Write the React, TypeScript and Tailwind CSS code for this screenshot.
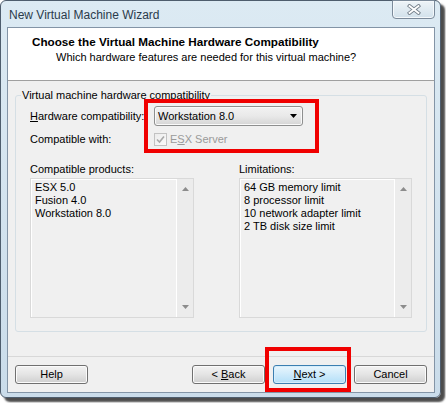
import React from "react";

const ScrollArrow = ({ down }: { down?: boolean }) => (
  <svg width="7" height="4" viewBox="0 0 7 4" className="block">
    {down ? (
      <polygon points="0,0 7,0 3.5,4" fill="#8c8c8c" />
    ) : (
      <polygon points="0,4 7,4 3.5,0" fill="#8c8c8c" />
    )}
  </svg>
);

const ListBox = ({ items, className }: { items: string[]; className: string }) => (
  <div
    className={`flex h-[140px] border border-[#d9d9d9] bg-[#f0f0f0] shadow-[inset_1px_1px_0_#ffffff] ${className}`}
  >
    <div className="flex-1 pl-[4px] pt-[2px] leading-[13px]">
      {items.map((item) => (
        <div key={item}>{item}</div>
      ))}
    </div>
    <div className="flex w-[17px] flex-col items-center justify-between border-l border-[#ffffff] bg-[#ececec] pt-[8px] pb-[8px]">
      <ScrollArrow />
      <ScrollArrow down />
    </div>
  </div>
);

const WizardButton = ({
  children,
  primary,
}: {
  children: React.ReactNode;
  primary?: boolean;
}) => (
  <button
    className={`h-[19px] w-[73px] rounded-[3px] border leading-[15px] text-black ${
      primary
        ? "border-[#3c7fb1] bg-gradient-to-b from-[#eaf6fd] to-[#b3dff8] shadow-[inset_0_0_0_1px_#d6eefc]"
        : "border-[#707070] bg-gradient-to-b from-[#f3f3f3] via-[#e4e4e4] to-[#cfcfcf] shadow-[inset_0_0_0_1px_#fbfbfb]"
    }`}
  >
    {children}
  </button>
);

export default function App() {
  return (
    <div className="relative h-[403px] w-[446px] bg-white font-['Liberation_Sans',Arial,sans-serif] text-[11px] text-black">
      {/* window frame */}
      <div className="flex h-[398px] w-[441px] flex-col rounded-[6px] border border-[#4e5d6d] bg-gradient-to-b from-[#dceaf3] to-[#cadcea] pl-[6px] pr-[5px] pb-[4px] shadow-[4px_4px_2px_rgba(0,0,0,0.7)]">
        <div className="flex h-[26px] items-start justify-between">
          <div className="pt-[6px] pl-[2px] text-[12px] leading-[16px] text-[#2b3b4b]">
            New Virtual Machine Wizard
          </div>
          <div className="-mt-[1px] flex h-[19px] w-[43px] items-center justify-center rounded-b-[4px] border border-[#7b8a9a] bg-gradient-to-b from-[#eef4f8] to-[#d2e1eb] shadow-[inset_0_0_0_1px_#f4f8fb]">
            <svg width="14" height="11" viewBox="0 0 14 11">
              <path
                d="M2.5 2 L11.5 9 M11.5 2 L2.5 9"
                stroke="#76818c"
                strokeWidth="3.6"
                strokeLinecap="square"
              />
              <path
                d="M2.5 2 L11.5 9 M11.5 2 L2.5 9"
                stroke="#ffffff"
                strokeWidth="1.8"
                strokeLinecap="square"
              />
            </svg>
          </div>
        </div>

        {/* client area */}
        <div className="flex flex-1 flex-col border border-[#8394a6] bg-[#f0f0f0]">
          <div className="h-[53px] border-b border-[#a0a0a0] bg-white pt-[7px]">
            <div className="pl-[24px] text-[11.7px] font-bold leading-[14px]">
              Choose the Virtual Machine Hardware Compatibility
            </div>
            <div className="pl-[48px] pt-[1px] leading-[14px]">
              Which hardware features are needed for this virtual machine?
            </div>
          </div>

          <fieldset className="mx-[7px] mt-[8px] rounded-[3px] border border-[#d5dfe5]">
            <legend className="ml-[5px] px-[1px] leading-[13px]">
              Virtual machine hardware compatibility
            </legend>
            <div className="pt-[4px] pl-[14px] pr-[14px] pb-[13px]">
              <div className="flex h-[20px] items-center">
                <div className="w-[124px]">
                  <span className="underline">H</span>ardware compatibility:
                </div>
                <div className="flex h-[20px] w-[149px] items-center justify-between rounded-[3px] border border-[#8e8f8f] bg-gradient-to-b from-[#f2f2f2] via-[#e9e9e9] to-[#d5d5d5] pl-[3px] pr-[5px] shadow-[inset_0_0_0_1px_#fafafa]">
                  <span>Workstation 8.0</span>
                  <svg width="7" height="4" viewBox="0 0 7 4">
                    <polygon points="0,0 7,0 3.5,4" fill="#000000" />
                  </svg>
                </div>
              </div>
              <div className="mt-[7px] flex h-[13px] items-center">
                <div className="w-[124px]">Compatible with:</div>
                <div className="flex items-center gap-[3px] text-[#9a9a9a]">
                  <div className="flex h-[13px] w-[13px] items-center justify-center border border-[#c2c2c2] bg-gradient-to-br from-[#ececec] to-[#fafafa]">
                    <svg width="9" height="9" viewBox="0 0 9 9">
                      <path d="M1 4.5 L3.5 7 L8 1.5" stroke="#a8a8a8" strokeWidth="1.6" fill="none" />
                    </svg>
                  </div>
                  <span>
                    E<span className="underline">S</span>X Server
                  </span>
                </div>
              </div>
              <div className="mt-[17px] flex gap-[45px]">
                <div className="flex w-[164px] flex-col gap-[2px]">
                  <div className="leading-[13px]">Compatible products:</div>
                  <ListBox items={["ESX 5.0", "Fusion 4.0", "Workstation 8.0"]} className="w-[164px]" />
                </div>
                <div className="flex w-[173px] flex-col gap-[2px]">
                  <div className="leading-[13px]">Limitations:</div>
                  <ListBox
                    items={[
                      "64 GB memory limit",
                      "8 processor limit",
                      "10 network adapter limit",
                      "2 TB disk size limit",
                    ]}
                    className="w-[173px]"
                  />
                </div>
              </div>
            </div>
          </fieldset>

          <div className="mt-auto flex items-center justify-between border-t border-[#d8d8d8] px-[7px] pt-[8px] pb-[8px]">
            <WizardButton>Help</WizardButton>
            <div className="flex gap-[8px]">
              <WizardButton>
                &lt; <span className="underline">B</span>ack
              </WizardButton>
              <WizardButton primary>
                <span className="underline">N</span>ext &gt;
              </WizardButton>
              <WizardButton>Cancel</WizardButton>
            </div>
          </div>
        </div>
      </div>

      {/* red annotation boxes */}
      <div className="absolute top-[99px] left-[144px] h-[54px] w-[175px] border-[4px] border-[#f00000]" />
      <div className="absolute top-[347px] left-[265px] h-[45px] w-[86px] border-[4px] border-[#f00000]" />
    </div>
  );
}
